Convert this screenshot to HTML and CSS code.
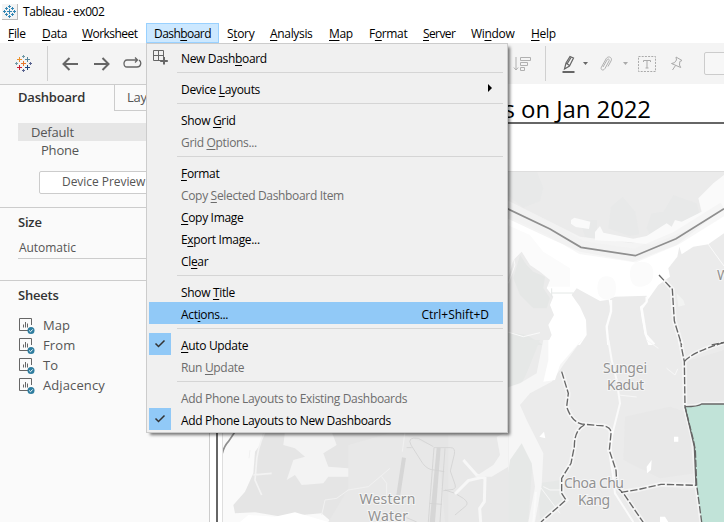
FILE: index.html
```html
<!DOCTYPE html>
<html lang="en">
<head>
<meta charset="utf-8">
<title>Tableau - ex002</title>
<link rel="stylesheet" href="styles.css">
</head>
<body>
<div class="app">
  <header class="titlebar">
    <svg class="app-icon" viewBox="0 0 15 15"><path d="M7.500 5v5M5 7.500h5M7.500 1v3M6 2.500h3M7.500 11v3M6 12.500h3M2.500 6v3M1 7.500h3M12.500 6v3M11 7.500h3M4.500 3v3M3 4.500h3M10.500 3v3M9 4.500h3M4.500 9v3M3 10.500h3M10.500 9v3M9 10.500h3"/></svg>
    <span>Tableau - ex002</span>
  </header>
  <nav class="menubar">
    <span class="m-file"><u>F</u>ile</span><span class="m-data"><u>D</u>ata</span><span class="m-work"><u>W</u>orksheet</span><span class="m-dash open">Dash<u>b</u>oard</span><span class="m-story">S<u>t</u>ory</span><span class="m-anal"><u>A</u>nalysis</span><span class="m-map"><u>M</u>ap</span><span class="m-form">F<u>o</u>rmat</span><span class="m-serv"><u>S</u>erver</span><span class="m-wind">Wi<u>n</u>dow</span><span class="m-help"><u>H</u>elp</span>
  </nav>
  <div class="toolbar">
    <svg class="t-logo" viewBox="0 0 17 17">
      <path stroke="#e8762c" d="M8.500 6v5M6 8.500h5"/><path stroke="#c72035" d="M4.500 10v5M2 12.500h5"/><path stroke="#eb912c" d="M4.500 2v5M2 4.500h5"/><path stroke="#59879b" d="M12.500 2v5M10 4.500h5"/><path stroke="#1f457e" d="M12.500 10v5M10 12.500h5"/><path stroke="#7099a6" d="M8.500 0v3M7 1.500h3M1.500 7v3M0 8.500h3"/><path stroke="#5b6591" d="M8.500 14v3M7 15.500h3M15.500 7v3M14 8.500h3"/>
    </svg>
    <i class="divider d1"></i>
    <svg class="t-back" viewBox="0 0 16 14"><path d="M16 7H1.500M7.500 1l-6 6 6 6"/></svg>
    <svg class="t-fwd" viewBox="0 0 16 14"><path d="M0 7h14.500M8.500 1l6 6-6 6"/></svg>
    <svg class="t-redo" viewBox="0 0 19 12"><path d="M12 3H4C0 3 0 10 4 10h10c4 0 5-5 2-7M9.500 3h5M12 .5 14.500 3 12 5.500"/></svg>
    <svg class="t-sort" viewBox="0 0 19 16"><path d="M3 1v13M.8 11.500 3 14l2.200-2.500M7.500 1.500h10v3h-10zM7.500 6.500h7v3h-7zM7.500 11.500h4v3h-4z"/></svg>
    <i class="divider d2"></i>
    <svg class="t-pen" viewBox="0 0 13 19"><path d="M2.500 14 4 8 8 1.500 11.500 3 7.500 11zM4 8l3.500 2.500M5 9l4-6.500"/><path class="bar" d="M.5 17h12"/></svg>
    <svg class="caret c1" viewBox="0 0 5 3"><path d="M0 0h5L2.500 3z"/></svg>
    <svg class="t-clip" viewBox="0 0 13 16"><path d="M4 11 8 4c1-2 3-.5 2 1l-4 7.500c-2 3-5 1-3.500-1.500L7 3c2-4 7-1.500 5 2L9 10.500"/></svg>
    <svg class="caret c2" viewBox="0 0 5 3"><path d="M0 0h5L2.500 3z"/></svg>
    <svg class="t-text" viewBox="0 0 18 16"><path stroke-dasharray="2 1.200" d="M.5.5h17v15H.5z"/><path d="M5.500 6V4.500h7V6M9 4.500v7.500M7.500 12h3"/></svg>
    <svg class="t-pin" viewBox="0 0 13 15"><path d="M6 1 12 4.500 9.800 5.500 9.500 9l1.200 2.500L1.500 7.500l3-.800L6.500 4zM5.500 9.500 2.500 14"/></svg>
    <i class="field"></i>
  </div>
  <main class="work">
    <aside class="side">
      <div class="tabs"><b>Dashboard</b><span>Layout</span></div>
      <div class="devices">
        <div class="dev on">Default</div>
        <div class="dev phone">Phone</div>
        <div class="preview">Device Preview</div>
      </div>
      <section class="size"><h2>Size</h2><div class="auto">Automatic</div></section>
      <section class="sheets"><h2>Sheets</h2>
        <ul>
          <li><svg viewBox="0 0 17 17"><path d="M10 13.500H1.500v-12h12V8M5.500 10.500v-3M7.500 10.500V5M9.500 10.500v-4"/><circle cx="13" cy="13.500" r="3.500"/><path class="tick" d="m11.200 13.500 1.300 1.300 2.200-2.400"/></svg>Map</li>
          <li><svg viewBox="0 0 17 17"><path d="M10 13.500H1.500v-12h12V8M5.500 10.500v-3M7.500 10.500V5M9.500 10.500v-4"/><circle cx="13" cy="13.500" r="3.500"/><path class="tick" d="m11.200 13.500 1.300 1.300 2.200-2.400"/></svg>From</li>
          <li><svg viewBox="0 0 17 17"><path d="M10 13.500H1.500v-12h12V8M5.500 10.500v-3M7.500 10.500V5M9.500 10.500v-4"/><circle cx="13" cy="13.500" r="3.500"/><path class="tick" d="m11.200 13.500 1.300 1.300 2.200-2.400"/></svg>To</li>
          <li><svg viewBox="0 0 17 17"><path d="M10 13.500H1.500v-12h12V8M5.500 10.500v-3M7.500 10.500V5M9.500 10.500v-4"/><circle cx="13" cy="13.500" r="3.500"/><path class="tick" d="m11.200 13.500 1.300 1.300 2.200-2.400"/></svg>Adjacency</li>
        </ul>
      </section>
    </aside>
    <section class="canvas">
      <h1>s on Jan 2022</h1>
      <svg class="map" viewBox="222 171 502 351">
        <rect x="222" y="171" width="502" height="351" fill="#ebebeb"/>
        <!-- northern strait and coast -->
        <g transform="translate(500 165) scale(.33333)">
          <path fill="#e8e9e9" d="M20 18h90l20 50-10 40-50 20-50-40zM325 190l8-65 35-30 38 45 12 68-30 5zM440 190l15-45 35-5 30-50 70 25 10 35-70 40-80 20zM240 165h50v65l-35-15z"/>
          <path fill="#f4f4f4" d="M0 95 240 215 400 235 530 190 672 95V540H0z"/>
          <path fill="#fafafa" d="M672 30 640 55l-45 45 10 40-60 30-20-5-10 20-15-10-60 38-40 8-90-18-10-20-15 18v25l100 5 70 8 120-50 120-70zM213 165l10-7 48 12-4 22-40-6-14-10z"/>
          <path fill="#fff" d="M0 150 160 225l80 35 160 30 130-50 142-110V540H0z"/>
          <path fill="#fbfbfb" d="M0 170 90 210 130 260 210 310v55H0zM390 325q0-35 35-35t35 35-35 40-35-40M292 370q0-36 28-36t28 36-28 34-28-34"/>
          <path fill="#ebebeb" d="M672 205 625 238 580 245 545 268 538 245 532 275 505 310 510 335 475 360 450 395 425 430 438 510 460 540H672zM440 392 345 395 330 402 333 440 320 485 325 540H445L433 505 425 460 420 425 440 408z"/>
          <path fill="#ebebeb" d="M230 370 300 408 326 404 333 440 318 485 325 540H240L260 510 258 465 240 425 215 390zM20 355 40 285 65 260 90 300 120 320 150 345 140 370 160 395 150 420 162 450 145 480 155 510 140 540H20z"/>
          <path fill="none" stroke="#fdfdfd" stroke-width="7" d="M333 405v35l-13 45 5 55M440 395v15l-15 20 13 80 25 28"/>
          <path fill="#e5e7e6" d="M60 270 80 300 100 320 135 335 130 370 150 400 140 430 100 430 60 390 40 340zM20 500l60 10 50 30H20z"/>
          <path fill="#f2f3f2" d="M530 385l20 20 5 15-20 5z"/>
          <path fill="none" stroke="#fafafa" stroke-width="3" d="M50 260 20 325M35 255l10 45-20 55M625 238l25 35 22 30M20 500l50 15 50-12"/>
          <path fill="none" stroke="#e4e8e6" stroke-width="3" d="M155 384h65M155 370v25"/>
          <path fill="none" stroke="#f0f0f0" stroke-width="40" d="m20 130 130 62 95 56 160 24 123-52 144-90" opacity=".55"/>
          <path class="border" d="m20 130 130 62 93 55 163 25 122-51 144-90"/>
        </g>
        <!-- inland areas east of the reservoir -->
        <g transform="translate(500 340) scale(.33333)">
          <path fill="#ebebeb" d="M0 15H672V546H0z"/>
          <path fill="#e6e8e7" d="M25 0H120L80 100 60 140 25 150zM25 240 65 240 100 330 95 400 85 546H0V430zM115 430 185 420 190 480 120 546z"/>
          <path fill="#e8e8e8" d="M375 230 510 200 570 220 585 400 480 415 370 360zM555 65 672 30V180L560 200zM350 450 480 440 590 450 600 546H430z"/>
          <path fill="#f6f6f6" d="M130 0H245L190 75 155 125 90 160 60 195 80 240 100 280 130 340 125 435 105 546H85L105 440 95 370 65 310 30 360 25 395 0 400V150L60 130 110 100z"/>
          <path fill="#fff" d="M145 0H245L180 75 165 120 130 125 145 60zM522 290h13v15h-13zM440 380l15-20-2 30-12 10zM480 530l15 0 10 16h-25zM118 290l14-15 4 20z"/>
          <path fill="none" stroke="#fafafa" stroke-width="6" d="M325 0 335 60 350 120 360 190 345 250 335 290 330 350 338 400 345 460 400 546M100 546l8-90"/>
          <path fill="none" stroke="#f7f7f7" stroke-width="3" d="M120 440l60 80M130 440l20 10h35M440 0l35 25M500 85l25 20 8-18M355 165l55 6"/>
          <path class="halo" d="M540 0 553 65 555 200 580 300 590 435 605 546M553 65q25-30 119-57M555 200q40 0 50-8h67M185 95l20 65-5 40q15 45 45 52l45 4q45 0 43 25l-5 50 20 60 3 50 20 20 60 88M253 255q-30 15-30 65l-10 50-28 45v45l13 20-75 66M363 457l50-8 70-16 107 3"/>
          <path fill="#c1e3d8" d="M556 201q40 0 50-8h66V546H605L590 435 583 320z"/>
          <path class="dash" d="M540 0 553 65 555 200 580 300 586 330 590 435 605 546M553 65q25-30 119-57M185 95l20 65-5 40q15 45 45 52l45 4q45 0 43 25l-5 50 20 60 3 50 20 20 60 88M253 255q-30 15-30 65l-10 50-28 45v45l13 20-75 66M363 457l50-8 70-16 107 3"/>
          <path class="green-edge" d="M555 200q40 0 50-8h67M555 200 583 320 588 435"/>
        </g>
        <g transform="translate(500 165) scale(.33333)">
          <path class="halo" d="M477 330 517 373 523 468 545 540"/>
          <path class="dash" d="M477 330 517 373 523 468 545 540M635 540l37-8"/>
        </g>
        <!-- western catchment and airfield -->
        <g transform="translate(215 425) scale(.33333)">
          <path fill="#e5e5e5" d="M20 0H880V291H20z"/>
          <path fill="#fafafa" d="M20 0H150L135 60 120 80 115 145 90 200 55 240 60 265 120 262 200 275 320 265 350 291H20z"/>
          <path fill="#e8e8e8" d="M400 60 540 20 670 70 690 291H340L400 190zM700 30 880 20V291H700z"/>
          <path fill="#f3f3f3" d="M210 20H350L365 60 325 85 340 125 400 130 400 155 340 155 325 175 260 180 240 150 215 165 235 105 270 95 240 70 205 60z"/>
          <path fill="#fff" d="M100 270 180 275 240 262 340 291H75z"/>
          <path fill="none" stroke="#f3f3f3" stroke-width="5" d="M150 20Q125 70 123 130l-3 35 20 45M115 150l55-5"/>
          <path fill="none" stroke="#f1f1f1" stroke-width="3" d="M320 270l10-45 35-5 35-25 60-10 65-55M500 155l15 20v35M570 20l-8 60M105 75l-3 25"/>
          <path fill="#d6d6d6" d="m561 97 12 2-17 111h-12zM665 68h12l-17 223h-16z"/>
          <path fill="none" stroke="#d2d2d2" stroke-width="2.500" d="M657 68h50q15 0 11 20l-12 50 14 40q5 10-5 15l-30 4M657 68 640 291M690 70 675 291M655 65l-45-25q-35-5-22 20l35 55q15 20 35 20l30 5M643 235l38 3M575 68h15M690 195l30 10 25 15q20 15 5 25l-30 25M575 278l30 13"/>
          <path fill="none" stroke="#f7f7f7" stroke-width="9" d="m745 105 40 45 25 10-2 70-14 20 3 41M720 207l40-40 50-12"/>
          <path fill="#f4f4f4" d="M845 35 880 20V125L830 155H780L835 120 855 90z"/>
          <path class="border" d="M22 85Q28 62 40 50L60 20"/>
        </g>
        <path class="frame" d="M222.500 522V171.500H724"/>
        <text x="603" y="373" textLength="44">Sungei</text><text x="607" y="389.500" textLength="37">Kadut</text>
        <text x="564" y="488" textLength="60">Choa Chu</text><text x="578" y="505" textLength="32">Kang</text>
        <text x="359.500" y="504" textLength="56">Western</text><text x="368" y="521" textLength="40">Water</text>
        <text x="717" y="280">W</text>
      </svg>
    </section>
  </main>
</div>
<div class="menu">
  <div class="item"><svg class="new" viewBox="0 0 16 16"><path d="M9 11.500H1.500v-10h10V8M6.500 1.500v10M1.500 6.500h10"/><path class="plus" d="M12 8v7.500M8.200 12h7.600"/></svg><span>New Dash<u>b</u>oard</span></div>
  <hr>
  <div class="item"><span>Device <u>L</u>ayouts</span><svg class="sub" viewBox="0 0 4 8"><path d="M0 0v8l4-4z"/></svg></div>
  <hr>
  <div class="item"><span>Show <u>G</u>rid</span></div>
  <div class="item off"><span>Grid <u>O</u>ptions...</span></div>
  <hr>
  <div class="item"><span><u>F</u>ormat</span></div>
  <div class="item off"><span>Copy <u>S</u>elected Dashboard Item</span></div>
  <div class="item"><span><u>C</u>opy Image</span></div>
  <div class="item"><span>E<u>x</u>port Image...</span></div>
  <div class="item"><span>Cl<u>e</u>ar</span></div>
  <hr>
  <div class="item"><span>Show <u>T</u>itle</span></div>
  <div class="item active"><span>Act<u>i</u>ons...</span><kbd>Ctrl+Shift+D</kbd></div>
  <hr>
  <div class="item"><svg class="check" viewBox="0 0 22 22"><path d="m6.500 10.500 3 3 6-6"/></svg><span><u>A</u>uto Update</span></div>
  <div class="item off"><span>Run <u>U</u>pdate</span></div>
  <hr>
  <div class="item off"><span>Add Phone Layouts to Existing Dashboards</span></div>
  <div class="item"><svg class="check" viewBox="0 0 22 22"><path d="m6.500 10.500 3 3 6-6"/></svg><span>Add Phone Layouts to New Dashboards</span></div>
</div>
</body>
</html>
```
FILE: styles.css
```css
* { box-sizing: border-box; }
body { margin: 0; background: #fff; font: 12px/20px "Open Sans", sans-serif; color: #000; width: 724px; height: 522px; overflow: hidden; letter-spacing: -.2px; }
svg { display: block; flex: none; fill: none; }
u { text-decoration: underline; text-underline-offset: 2px; text-decoration-thickness: 1px; text-decoration-skip-ink: none; }
.app { height: 522px; display: flex; flex-direction: column; }
.titlebar { height: 23px; display: flex; align-items: center; padding-left: 2px; gap: 5px; letter-spacing: -.45px; }
.app-icon { width: 16px; height: 16px; stroke: #3487b5; stroke-width: 1; background: #f4f4f4; border: solid #bbb; border-width: 0 1px 1px 0; }
.menubar { height: 20px; display: flex; line-height: 21px; padding-left: 8px; letter-spacing: -.33px; }
.menubar span { white-space: nowrap; flex: none; }
.m-file { width: 34px; } .m-data { width: 40px; } .m-work { width: 64px; letter-spacing: -.55px; }
.m-dash { width: 73px; margin-right: 8px; padding-left: 7px; letter-spacing: -.55px; }
.open { background: #cce8ff; border: 1px solid #99d1ff; line-height: 19px; }
.m-story { width: 43px; } .m-anal { width: 59px; } .m-map { width: 40px; } .m-form { width: 54px; } .m-serv { width: 48px; letter-spacing: -.6px; } .m-wind { width: 60px; }
.toolbar { height: 41px; background: #f4f4f4; display: flex; align-items: center; overflow: hidden; flex: none; }
.toolbar svg { stroke: #666; }
.toolbar i { flex: none; }
.toolbar .t-logo { width: 17px; height: 17px; margin-left: 15px; }
.divider { width: 1px; height: 35px; background: #d0d0d0; }
.d1 { margin-left: 15px; }
.toolbar .t-back, .toolbar .t-fwd { width: 16px; height: 14px; stroke-width: 2; margin-left: 14px; }
.toolbar .t-fwd { margin-left: 16px; }
.toolbar .t-redo { width: 19px; height: 12px; margin-left: 13px; margin-top: -2px; stroke-width: 1.3; }
.toolbar .t-sort { width: 19px; height: 16px; margin-left: 371px; stroke: #b0b0b0; }
.d2 { margin-left: 13px; }
.toolbar .t-pen { width: 13px; height: 19px; margin-left: 16px; margin-top: 1px; stroke-width: 1.2; }
.toolbar .t-pen .bar { stroke-width: 2; }
.toolbar .caret { width: 5px; height: 3px; fill: #666; stroke: none; margin-left: 8px; }
.toolbar .t-clip { width: 13px; height: 16px; margin-left: 11px; stroke: #b0b0b0; }
.toolbar .c2 { fill: #aaa; margin-left: 11px; }
.toolbar .t-text { width: 18px; height: 16px; margin-left: 10px; stroke: #aaa; }
.toolbar .t-pin { width: 13px; height: 15px; margin-left: 14px; stroke: #aaa; }
.field { width: 60px; height: 23px; border: 1px solid #ccc; border-radius: 2px; margin-left: 21px; background: #f7f7f7; }
.work { flex: 1; display: flex; min-height: 0; }
.side { width: 210px; flex: none; background: #fafafa; border: solid #ccc; border-width: 1px 1px 0 0; color: #555; }
.tabs { display: flex; height: 26px; padding-left: 18px; font-size: 13px; line-height: 25px; }
.tabs b { width: 96px; font-weight: 600; color: #333; }
.tabs span { flex: 1; border: solid #ccc; border-width: 0 0 1px 1px; padding-left: 12px; }
.devices { padding: 12px 0 0 18px; height: 96px; font-size: 13px; line-height: 18px; }
.dev { height: 18px; padding-left: 13px; }
.on { background: #e6e6e6; }
.phone { padding-left: 23px; }
.preview { border: 1px solid #ccc; background: #fff; border-radius: 2px; margin: 12px 20px 0 21px; height: 23px; line-height: 20px; font-size: 12px; padding-left: 22px; letter-spacing: -.05px; }
h2 { margin: 0; font-size: 13px; font-weight: 600; line-height: 20px; color: #333; }
.size { border-top: 1px solid #ccc; padding: 4px 0 0 18px; height: 73px; }
.auto { margin-top: 6px; height: 21px; padding-left: 1px; border-bottom: 1px solid #ccc; letter-spacing: -.05px; }
.sheets { border-top: 1px solid #ccc; padding: 4px 0 0 18px; }
ul { list-style: none; margin: 10px 0 0; padding: 0; font-size: 13px; letter-spacing: .1px; }
li { display: flex; height: 20px; align-items: center; gap: 8px; line-height: 20px; }
li svg { width: 17px; height: 17px; stroke: #666; margin-top: 1px; }
li circle { fill: #2e7d9f; stroke: none; }
li .tick { stroke: #fff; }
.canvas { flex: 1; min-width: 0; padding-left: 6px; display: flex; flex-direction: column; background: linear-gradient(#666, #666) 6px 38px / 2px 100% no-repeat; }
h1 { margin: 0; height: 40px; flex: none; border-bottom: 2px solid #666; padding-right: 73px; text-align: right; font: 24px/50px "Open Sans", sans-serif; letter-spacing: -.1px; }
.map { width: 502px; height: 351px; margin: 47px 0 0 6px; }
.border { stroke: #8f8f8f; stroke-width: 5; }
.frame { stroke: #dedede; }
.dash { stroke: #666; stroke-width: 4; stroke-dasharray: 22 6; }
.halo { stroke: #fff; stroke-width: 14; opacity: .5; }
.green-edge { stroke: #666; stroke-width: 4; }
.map text { font: 14px "Noto Sans", sans-serif; fill: #929292; stroke: #f5f5f5; stroke-width: 2; paint-order: stroke; letter-spacing: 0; }
.menu { position: absolute; left: 146px; top: 43px; width: 362px; height: 390px; background: #f0f0f0; border: 1px solid #ccc; padding: 2px 4px 2px 2px; box-shadow: 3px 3px 3px -1px #0008; letter-spacing: -.33px; }
.item { display: flex; align-items: center; height: 22px; position: relative; padding: 0 14px 0 32px; line-height: 22px; white-space: nowrap; }
.item > span { flex: 1; padding-top: 3px; }
.off { color: #6d6d6d; }
.active { background: #91c9f7; }
kbd { font: inherit; padding-top: 3px; letter-spacing: 0; }
hr { border: 0; height: 1px; background: #d5d5d5; margin: 4px 0 4px 28px; }
.new, .check { position: absolute; left: 0; top: 0; }
.new { left: 3px; top: 3px; width: 16px; height: 16px; stroke: #666; }
.new .plus { stroke-width: 2; }
.check { width: 22px; height: 22px; background: #91c9f7; stroke: #333; stroke-width: 1.5; }
.sub { width: 4px; height: 8px; fill: #000; margin-right: -3px; }
```
